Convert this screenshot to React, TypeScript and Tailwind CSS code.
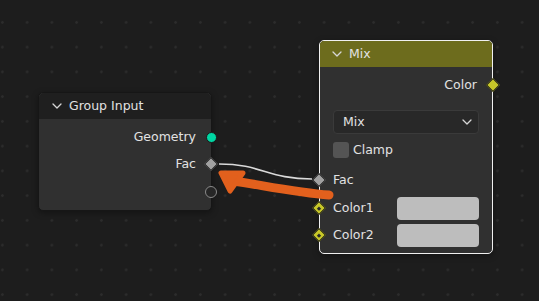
import React from 'react'

const font = { fontFamily: '"DejaVu Sans", "Liberation Sans", sans-serif' }

function Chevron({ className = '' }: { className?: string }) {
  return (
    <svg width="10" height="6" viewBox="0 0 10 6" className={className}>
      <polyline points="1,1 5,5 9,1" fill="none" stroke="#d6d6d6" strokeWidth="1.3" strokeLinecap="round" strokeLinejoin="round" />
    </svg>
  )
}

function Diamond({ color, dot = false }: { color: string; dot?: boolean }) {
  return (
    <div className="flex h-[14px] w-[14px] items-center justify-center">
      <div
        className={`flex h-[10px] w-[10px] rotate-45 items-center justify-center border border-[#1a1a1a] ${color}`}
      >
        {dot && <div className="h-[3px] w-[3px] bg-[#2a2a2a]" />}
      </div>
    </div>
  )
}

export default function App() {
  return (
    <div
      className="relative h-[301px] w-[539px] overflow-hidden bg-[#1d1d1d] bg-[radial-gradient(circle,#2c2c2c_1px,transparent_1.6px)] bg-[size:24.75px_24.75px] bg-[position:-10px_10px] text-[12.5px] text-[#e2e2e2]"
      style={font}
    >
      {/* Group Input node */}
      <div className="absolute left-[38px] top-[92px] flex w-[174px] flex-col rounded-[5px] border border-[#161616] bg-[#303030] shadow-[0_2px_6px_rgba(0,0,0,0.35)]">
        <div className="flex h-[26px] items-center gap-[7px] rounded-t-[5px] bg-[#1f1f1f] pl-[13px]">
          <Chevron />
          <span>Group Input</span>
        </div>
        <div className="flex flex-col pb-[5px] pt-[5px]">
          <div className="relative flex h-[27px] items-center justify-end pr-[15px]">
            Geometry
            <div className="absolute right-[-6px] top-[8px] h-[11px] w-[11px] rounded-full border border-[#1a1a1a] bg-[#00d6a3]" />
          </div>
          <div className="relative flex h-[27px] items-center justify-end pr-[15px]">
            Fac
            <div className="absolute right-[-7px] top-[6px]">
              <Diamond color="bg-[#a1a1a1]" />
            </div>
          </div>
          <div className="relative flex h-[27px] items-center justify-end pr-[15px]">
            <div className="absolute right-[-6px] top-[8px] h-[12px] w-[12px] rounded-full border-[1.5px] border-[#8a8a8a] bg-[#262626]" />
          </div>
        </div>
      </div>

      {/* Mix node */}
      <div className="absolute left-[319px] top-[40px] flex w-[174px] flex-col rounded-[5px] border border-[#f0f0f0] bg-[#303030] shadow-[0_2px_6px_rgba(0,0,0,0.35)]">
        <div className="flex h-[26px] items-center gap-[7px] rounded-t-[4px] bg-[#6d6c1d] pl-[12px]">
          <Chevron />
          <span>Mix</span>
        </div>
        <div className="flex flex-col px-[13px] pb-[6px] pt-[5px]">
          <div className="relative flex h-[26px] items-center justify-end pr-[2px]">
            Color
            <div className="absolute right-[-21px] top-[6px]">
              <Diamond color="bg-[#c7c729]" />
            </div>
          </div>
          <div className="mt-[12px] flex h-[24px] items-center justify-between rounded-[4px] border border-[#3a3a3a] bg-[#282828] pl-[9px] pr-[6px]">
            <span>Mix</span>
            <Chevron />
          </div>
          <div className="mt-[7px] flex h-[18px] items-center gap-[4px]">
            <div className="h-[16px] w-[16px] rounded-[3px] bg-[#545454]" />
            <span>Clamp</span>
          </div>
          <div className="relative mt-[8px] flex h-[26px] items-center">
            Fac
            <div className="absolute left-[-21px] top-[6px]">
              <Diamond color="bg-[#a1a1a1]" />
            </div>
          </div>
          <div className="relative mt-[4px] flex h-[23px] items-center justify-between">
            Color1
            <div className="h-[23px] w-[82px] rounded-[4px] bg-[#bdbdbd]" />
            <div className="absolute left-[-21px] top-[4px]">
              <Diamond color="bg-[#c7c729]" dot />
            </div>
          </div>
          <div className="relative mt-[4px] flex h-[23px] items-center justify-between">
            Color2
            <div className="h-[23px] w-[82px] rounded-[4px] bg-[#bdbdbd]" />
            <div className="absolute left-[-21px] top-[4px]">
              <Diamond color="bg-[#c7c729]" dot />
            </div>
          </div>
        </div>
      </div>

      {/* Links and annotation */}
      <svg className="pointer-events-none absolute left-0 top-0" width="539" height="301">
        <path d="M219 164 C 262 164, 268 179, 312 179" fill="none" stroke="#dadada" strokeWidth="1.6" />
        <path d="M329 195 C 300 193, 266 186, 234 181" fill="none" stroke="#e2601d" strokeWidth="9" strokeLinecap="round" />
        <polygon points="221,173 243,173 230,191" fill="#e2601d" stroke="#e2601d" strokeWidth="5" strokeLinejoin="round" />
      </svg>
    </div>
  )
}
